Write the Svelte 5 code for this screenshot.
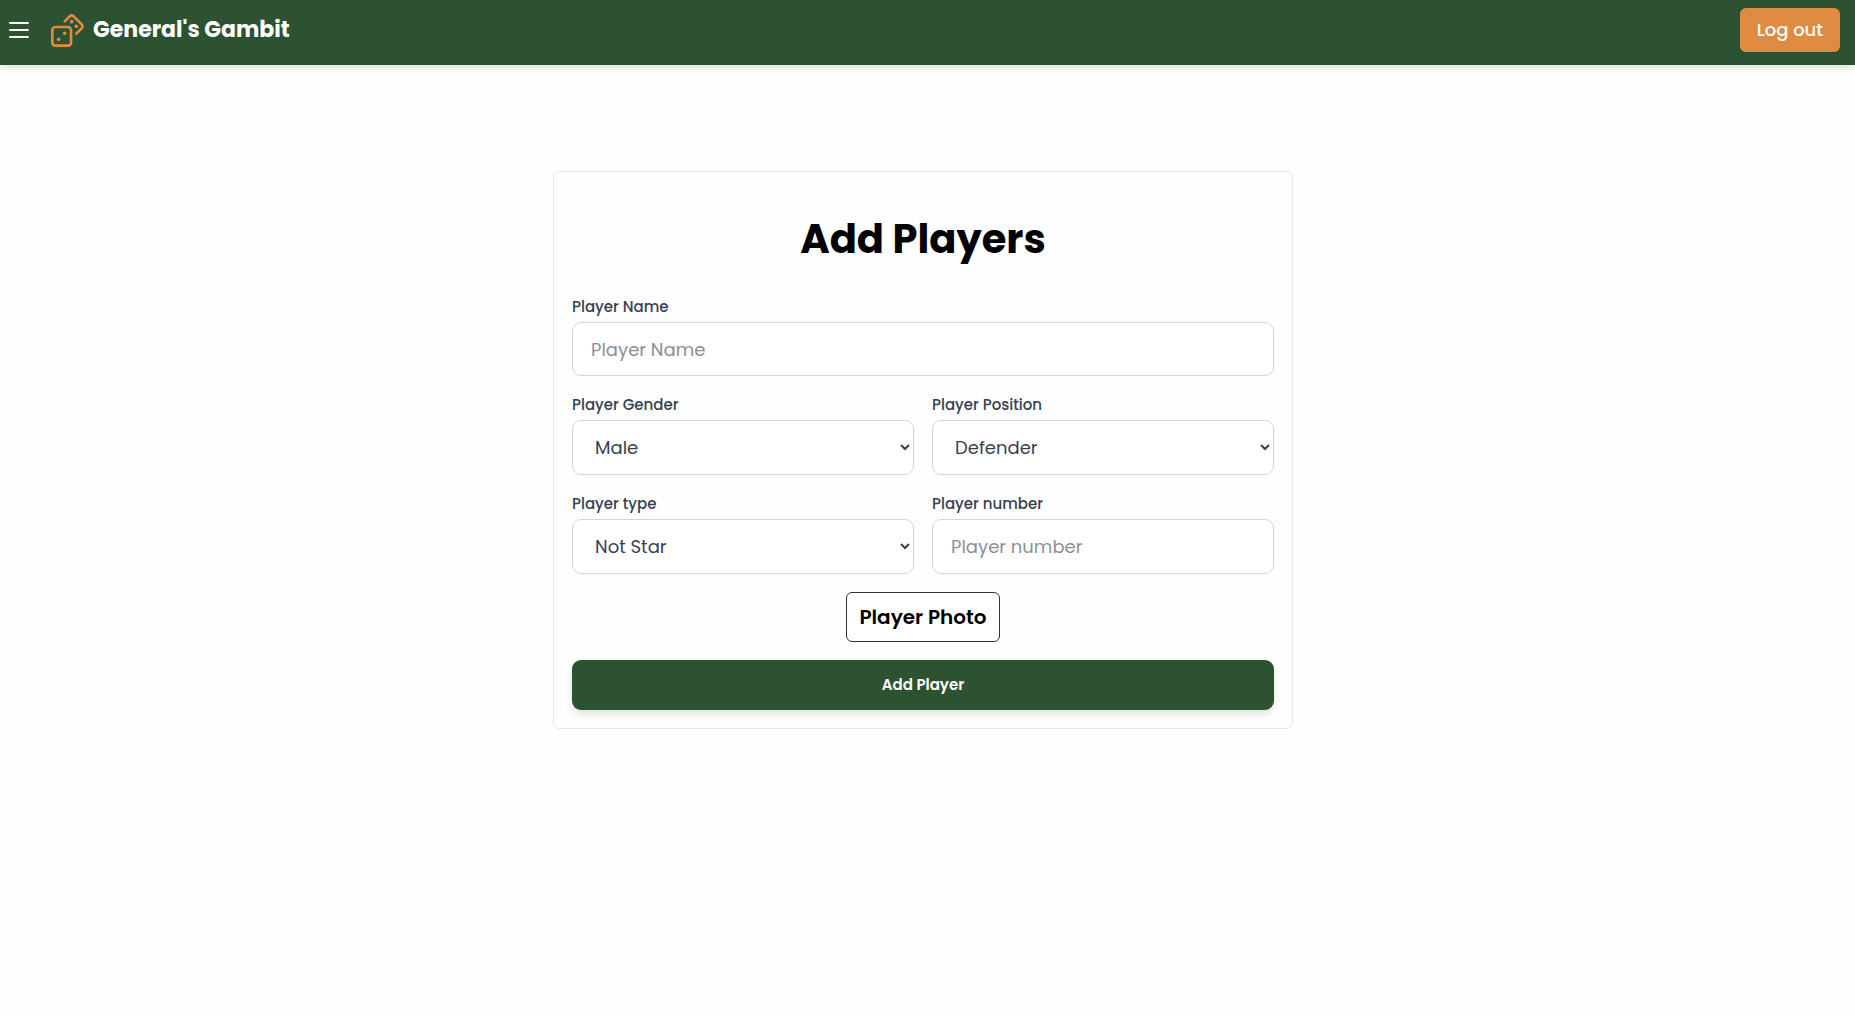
<!-- AddPlayers.svelte -->
<script>
    let menuOpen = false;
    let photoInput;

    let player = {
        name: "",
        gender: "Male",
        position: "Defender",
        type: "Not Star",
        number: "",
    };

    const genders = ["Male", "Female"];
    const positions = ["Goalkeeper", "Defender", "Midfielder", "Forward"];
    const types = ["Star", "Not Star"];

    function addPlayer() {
        player = { ...player, name: "", number: "" };
    }
</script>

<svelte:head>
    <title>General's Gambit</title>
</svelte:head>

<header>
    <button
        type="button"
        class="menu"
        aria-label="Menu"
        aria-expanded={menuOpen}
        on:click={() => (menuOpen = !menuOpen)}
    >
        <svg viewBox="0 0 20 16" width="20" height="16" fill="none" stroke="currentColor" stroke-width="2" stroke-linecap="round">
            <path d="M1 1H19M1 8H19M1 15H19" />
        </svg>
    </button>

    <a class="brand" href="/">
        <svg viewBox="0 0 99 99" width="33" height="33" fill="none" stroke="currentColor" stroke-width="8" stroke-linecap="round" stroke-linejoin="round">
            <rect x="4" y="39" width="56" height="56" rx="9" />
            <path d="M41 22L56 7Q62 1 68 7L92 31Q98 37 92 43L76 59" />
            <g fill="currentColor" stroke="none">
                <circle cx="62" cy="23" r="5.500" />
                <circle cx="76" cy="37" r="5.500" />
                <circle cx="41" cy="58" r="5.500" />
                <circle cx="23" cy="76" r="5.500" />
            </g>
        </svg>
        <span>General's Gambit</span>
    </a>

    <button type="button" class="logout">Log out</button>
</header>

<main>
    <form on:submit|preventDefault={addPlayer}>
        <h1>Add Players</h1>

        <div class="field">
            <label for="name">Player Name</label>
            <input id="name" type="text" placeholder="Player Name" bind:value={player.name} />
        </div>

        <div class="row">
            <div class="field">
                <label for="gender">Player Gender</label>
                <select id="gender" bind:value={player.gender}>
                    {#each genders as gender}
                        <option value={gender}>{gender}</option>
                    {/each}
                </select>
            </div>
            <div class="field">
                <label for="position">Player Position</label>
                <select id="position" bind:value={player.position}>
                    {#each positions as position}
                        <option value={position}>{position}</option>
                    {/each}
                </select>
            </div>
        </div>

        <div class="row">
            <div class="field">
                <label for="type">Player type</label>
                <select id="type" bind:value={player.type}>
                    {#each types as type}
                        <option value={type}>{type}</option>
                    {/each}
                </select>
            </div>
            <div class="field">
                <label for="number">Player number</label>
                <input id="number" type="text" inputmode="numeric" placeholder="Player number" bind:value={player.number} />
            </div>
        </div>

        <input type="file" accept="image/*" hidden bind:this={photoInput} />
        <button type="button" class="photo" on:click={() => photoInput.click()}>Player Photo</button>

        <button type="submit" class="submit">Add Player</button>
    </form>
</main>

<style>
    :global(body) {
        background-color: #fefefe;
        font-family: Poppins, Inter, sans-serif;
    }

    header {
        display: flex;
        align-items: center;
        box-sizing: border-box;
        padding: 8px 15px 13px 9px;
        background-color: #2c5232;
        color: white;
        box-shadow: 0 3px 7px rgba(44, 82, 50, 0.15);
    }

    button,
    input,
    select {
        box-sizing: border-box;
        font-family: inherit;
    }

    button {
        cursor: pointer;
    }

    svg {
        display: block;
    }

    .menu {
        padding: 0;
        border: none;
        background: none;
        color: white;
    }

    .brand {
        display: flex;
        align-items: center;
        gap: 9px;
        margin-left: 22px;
        color: #df8b42;
        text-decoration: none;
    }

    .brand span {
        color: white;
        font-size: 22px;
        font-weight: 700;
        line-height: 32px;
    }

    .logout {
        margin-left: auto;
        padding: 9px 17px;
        border: none;
        border-radius: 6px;
        background-color: #df8b42;
        color: white;
        font-size: 18px;
        font-weight: 500;
        line-height: 26px;
    }

    main {
        display: flex;
        justify-content: center;
        padding: 106px 27px 40px 18px;
    }

    form {
        display: flex;
        flex-direction: column;
        gap: 18px;
        box-sizing: border-box;
        width: 100%;
        max-width: 740px;
        padding: 18px;
        border: 1px solid #e5e7eb;
        border-radius: 6px;
    }

    h1 {
        margin: 27px 0 17px;
        color: black;
        font-size: 40px;
        font-weight: 700;
        line-height: 44px;
        text-align: center;
    }

    .row {
        display: grid;
        grid-template-columns: 1fr 1fr;
        gap: 18px;
    }

    .field {
        display: flex;
        flex-direction: column;
        gap: 4px;
    }

    label {
        color: #374151;
        font-size: 15px;
        font-weight: 500;
        line-height: 22px;
    }

    .field input,
    select {
        width: 100%;
        height: 54px;
        padding: 0 18px;
        border: 1px solid #d1d5db;
        border-radius: 9px;
        background-color: white;
        color: #374151;
        font-size: 18px;
    }

    .row input,
    select {
        height: 55px;
    }

    .field input::placeholder {
        color: #8b8f96;
    }

    .photo {
        align-self: center;
        padding: 11px 12px;
        border: 1px solid #333;
        border-radius: 6px;
        background-color: white;
        color: black;
        font-size: 20px;
        font-weight: 600;
        line-height: 26px;
    }

    .submit {
        padding: 14px 18px;
        border: none;
        border-radius: 9px;
        background-color: #2c5232;
        color: white;
        font-size: 15px;
        font-weight: 600;
        line-height: 22px;
        box-shadow: 0 4px 7px rgba(44, 82, 50, 0.15);
    }
</style>
